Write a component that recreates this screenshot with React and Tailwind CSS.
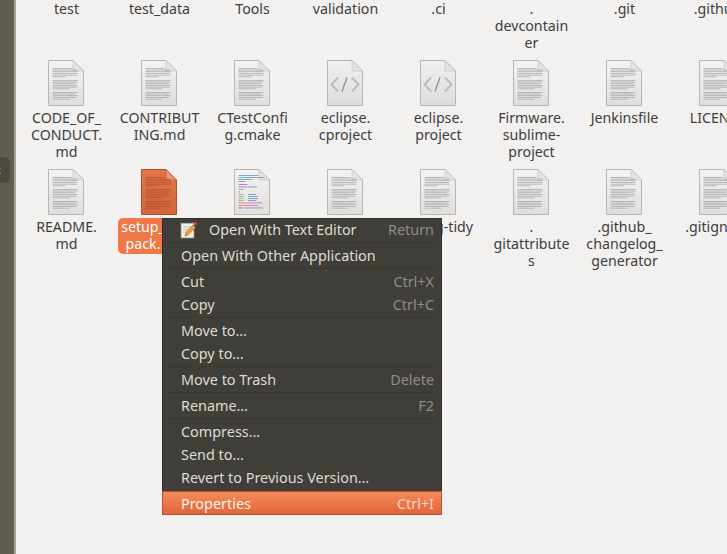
const sheetLines = [
  [68, 19], [69.7, 25], [71.4, 25], [73.1, 25], [74.8, 25], [76.5, 13],
  [80, 25], [81.7, 25], [83.4, 23], [85.1, 25], [86.8, 24], [88.5, 17],
  [92, 25], [93.7, 23], [95.4, 25], [97.1, 24], [98.8, 17],
];

function DocIcon({ selected = false }) {
  const id = selected ? "docSelected" : "docPlain";
  const edge = selected ? "#a9502d" : "#b7b6b3";
  const ink = selected ? "#b0532c" : "#a3a3a2";
  return (
    <svg width="36" height="46" viewBox="0 0 36 46">
      <defs>
        <linearGradient id={id} x1="0" y1="0" x2="0" y2="1">
          <stop offset="0" stopColor={selected ? "#e4744a" : "#f4f3f1"} />
          <stop offset="1" stopColor={selected ? "#d4643a" : "#dfdedc"} />
        </linearGradient>
      </defs>
      <path d="M.5.5H25L35.5 11V45.5H.5Z" fill={`url(#${id})`} stroke={edge} />
      <path d="M25 .5V11H35.5Z" fill={selected ? "#eb9670" : "#e4e3e1"} stroke={edge} strokeWidth="0.5" />
      {sheetLines.map((l, i) => (
        <rect key={i} x="4.5" y={l[0] - 60} width={l[1]} height="0.7" fill={ink} />
      ))}
    </svg>
  );
}

function CodeIcon() {
  return (
    <svg width="36" height="46" viewBox="0 0 36 46">
      <defs>
        <linearGradient id="codeDoc" x1="0" y1="0" x2="0" y2="1">
          <stop offset="0" stopColor="#f1f0ee" />
          <stop offset="1" stopColor="#dddcda" />
        </linearGradient>
      </defs>
      <path d="M.5.5H25L35.5 11V45.5H.5Z" fill="url(#codeDoc)" stroke="#b7b6b3" />
      <path d="M25 .5V11H35.5Z" fill="#e4e3e1" stroke="#b7b6b3" strokeWidth="0.5" />
      <path d="M11 17.5 4.5 24.5l6.5 7M25 17.5l6.5 7-6.5 7" fill="none" stroke="#bcbcba" strokeWidth="2" />
      <path d="M15 31.5 20 17.5" fill="none" stroke="#8f8f8d" strokeWidth="1.3" />
    </svg>
  );
}

const colorLines = [
  ["#6f9fc2", 4.5, 20, 6], ["#6f9fc2", 4.5, 26, 8], ["#6f9fc2", 4.5, 14, 10], ["#6f9fc2", 4.5, 7, 12],
  ["#c565c9", 4.5, 9, 15], ["#c565c9", 4.5, 9, 17.5], ["#6f9fc2", 14, 9, 17.5],
  ["#85bd85", 4.5, 5, 20], ["#888888", 4.5, 1.5, 22.5],
  ["#85bd85", 4.5, 5, 25], ["#6f9fc2", 14, 8, 25],
  ["#85bd85", 4.5, 5, 27], ["#6f9fc2", 14, 10, 27],
  ["#85bd85", 4.5, 5, 29], ["#6f9fc2", 14, 10, 29],
  ["#85bd85", 4.5, 5, 31], ["#6f9fc2", 14, 8, 31],
  ["#dd79b0", 4.5, 24, 33.5], ["#dd79b0", 4.5, 20, 36],
  ["#df4252", 4.5, 4, 38.5], ["#6f9fc2", 10, 19, 38.5],
];

function ColorDocIcon() {
  return (
    <svg width="36" height="46" viewBox="0 0 36 46">
      <defs>
        <linearGradient id="colorDoc" x1="0" y1="0" x2="0" y2="1">
          <stop offset="0" stopColor="#f5f4f2" />
          <stop offset="1" stopColor="#e0dfdd" />
        </linearGradient>
      </defs>
      <path d="M.5.5H25L35.5 11V45.5H.5Z" fill="url(#colorDoc)" stroke="#b7b6b3" />
      <path d="M25 .5V11H35.5Z" fill="#e4e3e1" stroke="#b7b6b3" strokeWidth="0.5" />
      {colorLines.map((r, i) => (
        <rect key={i} x={r[1]} y={r[3]} width={r[2]} height="0.9" fill={r[0]} />
      ))}
    </svg>
  );
}

function FileItem({ label, icon = "doc", selected = false }) {
  return (
    <div className="flex flex-col items-center">
      <div className="h-[46px] mb-[3px] mr-[2px]">
        {icon === "doc" && <DocIcon selected={selected} />}
        {icon === "code" && <CodeIcon />}
        {icon === "color" && <ColorDocIcon />}
      </div>
      <div
        className={
          "w-[84px] text-center leading-[17px] whitespace-pre-line " +
          (selected ? "bg-[#f07746] text-white rounded-[5px] pb-[2px] pr-[33px]" : "text-[#3d3d3d]")
        }
      >
        {label}
      </div>
    </div>
  );
}

const topRow = ["test", "test_data", "Tools", "validation", ".ci", ".\ndevcontain\ner", ".git", ".github"];

const middleRow = [
  { label: "CODE_OF_\nCONDUCT.\nmd" },
  { label: "CONTRIBUT\nING.md" },
  { label: "CTestConfi\ng.cmake" },
  { label: "eclipse.\ncproject", icon: "code" },
  { label: "eclipse.\nproject", icon: "code" },
  { label: "Firmware.\nsublime-\nproject" },
  { label: "Jenkinsfile" },
  { label: "LICENSE" },
];

const bottomRow = [
  { label: "README.\nmd" },
  { label: "setup_\npack.", selected: true },
  { label: "", icon: "color" },
  { label: "", icon: "doc" },
  { label: ".clang-tidy" },
  { label: ".\ngitattribute\ns" },
  { label: ".github_\nchangelog_\ngenerator" },
  { label: ".gitignore" },
];

const menuGroups = [
  [{ text: "Open With Text Editor", key: "Return", icon: true }],
  [{ text: "Open With Other Application" }],
  [{ text: "Cut", key: "Ctrl+X" }, { text: "Copy", key: "Ctrl+C" }],
  [{ text: "Move to…" }, { text: "Copy to…" }],
  [{ text: "Move to Trash", key: "Delete" }],
  [{ text: "Rename…", key: "F2" }],
  [{ text: "Compress…" }, { text: "Send to…" }, { text: "Revert to Previous Version…" }],
];

function EditorIcon() {
  return (
    <svg className="absolute left-[17px] top-[3px]" width="18" height="18" viewBox="0 0 18 18">
      <rect x="1" y="2" width="13" height="15" fill="#f4f1e6" stroke="#8a8a80" strokeWidth="0.8" />
      <path d="M2 1.5h11" stroke="#444" strokeWidth="1.6" strokeDasharray="1.2 1" />
      <path d="M3 6h9M3 8.5h7M3 11h5" stroke="#aaa" strokeWidth="0.7" />
      <path d="M5 15 6 11.5 13 4l2.5 2.4L8 14Z" fill="#f2a23a" stroke="#b8641c" strokeWidth="0.7" />
      <circle cx="15.5" cy="2.5" r="1.6" fill="#d8413a" />
    </svg>
  );
}

function MenuRow({ text, shortcut, icon }) {
  return (
    <div className="relative h-[23px] pl-[18px] pr-[7px] flex items-center justify-between text-[#dfdbd2]">
      {icon && <EditorIcon />}
      <span className={icon ? "pl-[28px]" : ""}>{text}</span>
      {shortcut && <span className="text-[#8f8c84]">{shortcut}</span>}
    </div>
  );
}

export default function App() {
  return (
    <div
      className="relative w-[727px] h-[554px] overflow-hidden flex bg-[#f2f1f0] text-[14.2px]"
      style={{ fontFamily: '"Noto Sans", sans-serif' }}
    >
      <div className="relative w-[14px] bg-[#5f5e51] border-r-2 border-[#a3a297] box-content shrink-0">
        <div className="absolute left-[-14px] top-[157px] w-[24px] h-[26px] rounded-[6px] bg-[#4a4a41] flex items-center justify-end pr-[9px] text-white text-[10px] leading-none">
          :
        </div>
      </div>

      <div className="pl-[4px] grid grid-cols-[repeat(8,93px)] grid-rows-[60px_109px_109px]">
        {topRow.map((t) => (
          <div key={t} className="w-[84px] justify-self-center text-center leading-[17px] whitespace-pre-line text-[#3d3d3d]">
            {t}
          </div>
        ))}
        {middleRow.map((f) => (
          <FileItem key={f.label} {...f} />
        ))}
        {bottomRow.map((f, i) => (
          <FileItem key={i} {...f} />
        ))}
      </div>

      <div className="absolute left-[162px] top-[218px] w-[280px] bg-[#3f3e39] border border-[#2f2e2a] flex flex-col text-[14.4px]">
        <div className="-mt-px flex flex-col">
          {menuGroups.map((group, i) => (
            <div key={i}>
              {group.map((row) => (
                <MenuRow key={row.text} text={row.text} shortcut={row.key} icon={row.icon} />
              ))}
              {i < menuGroups.length - 1 && <div className="h-px my-px mx-[5px] bg-[#383732]" />}
            </div>
          ))}
        </div>
        <div className="h-[24px] mt-[2px] -mx-px -mb-px pl-[18px] pr-[7px] pt-px flex items-center justify-between text-[#fdf3ec] bg-gradient-to-b from-[#f58a5b] to-[#e2643a] border border-[#b8532c]">
          <span>Properties</span>
          <span className="text-[#f6d5c4]">Ctrl+I</span>
        </div>
      </div>
    </div>
  );
}
